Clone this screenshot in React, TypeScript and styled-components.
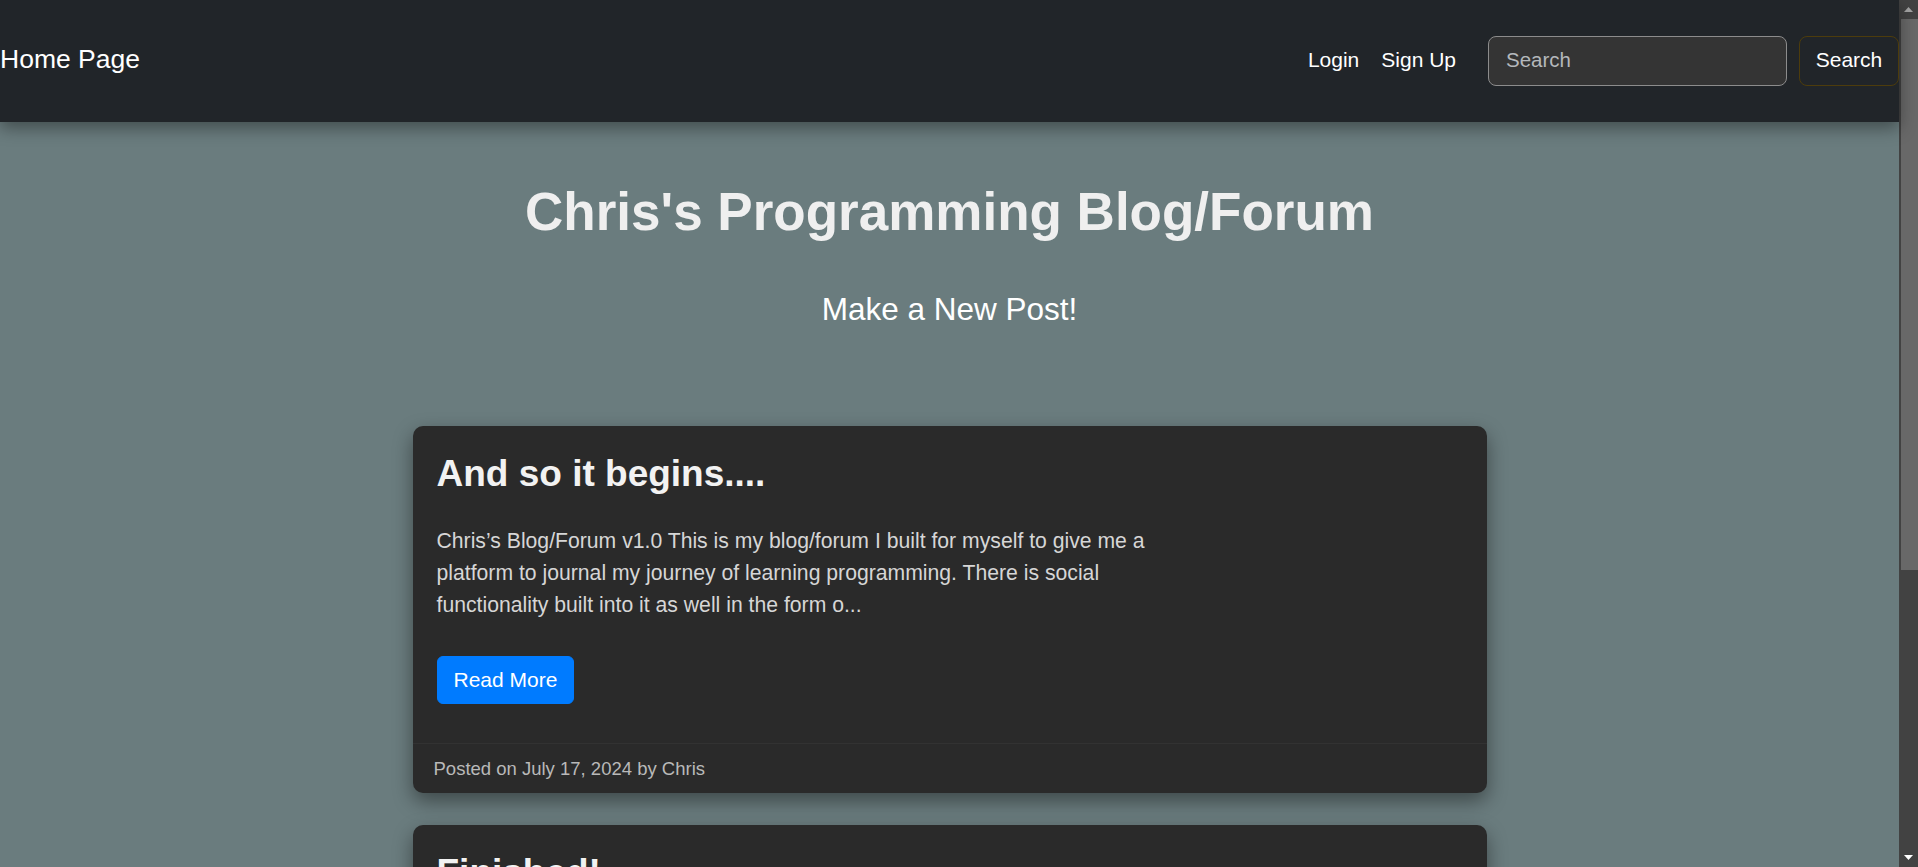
import React from "react";
import styled, { createGlobalStyle } from "styled-components";

const GlobalStyle = createGlobalStyle`
  html, body {
    background: #6a7c7e;
  }
  body {
    margin: 0;
    font-family: "Liberation Sans", Arial, sans-serif;
    color: #f0f0f0;
  }
  * {
    box-sizing: border-box;
  }
`;

const Shell = styled.div`
  display: flex;
  align-items: flex-start;
`;

const Page = styled.div`
  flex: 1;
  min-width: 0;
`;

/* window scrollbar (drawn, since the capture hides native scrollbars) */
const ScrollRail = styled.div`
  position: sticky;
  top: 0;
  flex: 0 0 19px;
  width: 19px;
  height: 100vh;
  background: #424242;
  display: flex;
  flex-direction: column;
`;

const ScrollButton = styled.div`
  flex: 0 0 19px;
  display: flex;
  align-items: center;
  justify-content: center;
`;

const ScrollTrack = styled.div`
  flex: 1;
  display: flex;
  flex-direction: column;
  padding-left: 2px;
`;

const ScrollThumb = styled.div`
  height: 551px;
  background: #686868;
`;

const NavBar = styled.nav`
  position: relative;
  z-index: 2;
  height: 122px;
  background: #212529;
  display: flex;
  align-items: center;
  justify-content: space-between;
  padding: 0;
  box-shadow: 0 6px 16px rgba(0, 0, 0, 0.38);
`;

const Brand = styled.a`
  font-size: 26.5px;
  line-height: 1.2;
  color: #ffffff;
  text-decoration: none;
  padding-bottom: 3px;
`;

const NavRight = styled.div`
  display: flex;
  align-items: center;
`;

const NavLinks = styled.ul`
  display: flex;
  list-style: none;
  margin: 0;
  padding: 0 0 2px;
`;

const NavLink = styled.a`
  display: block;
  padding: 0 11px;
  font-size: 21px;
  line-height: 1.5;
  color: #ffffff;
  text-decoration: none;
`;

const SearchForm = styled.form`
  display: flex;
  align-items: center;
  gap: 12px;
  margin: 0 0 0 21px;
`;

const SearchInput = styled.input`
  width: 299px;
  height: 50px;
  padding: 0 17px 2px;
  font-family: "Liberation Sans", Arial, sans-serif;
  font-size: 20.5px;
  color: #e6e6e6;
  background: #343434;
  border: 1px solid #8c8c8c;
  border-radius: 8px;
  outline: none;
  &::placeholder {
    color: #b4b8bc;
  }
`;

const SearchButton = styled.button`
  width: 100px;
  height: 50px;
  padding: 0 0 2px;
  font-family: "Liberation Sans", Arial, sans-serif;
  font-size: 21px;
  color: #ffffff;
  background: transparent;
  border: 1px solid #4d3c0c;
  border-radius: 8px;
  cursor: pointer;
`;

const Hero = styled.header`
  padding-top: 58px;
  text-align: center;
`;

const PageTitle = styled.h1`
  margin: 0 0 47px;
  font-size: 53px;
  line-height: 1.2;
  font-weight: 700;
  color: #efefef;
`;

const NewPostLink = styled.a`
  display: block;
  margin: 0;
  font-size: 31.5px;
  line-height: 1.2;
  font-weight: 400;
  color: #ffffff;
  text-decoration: none;
`;

const PostList = styled.main`
  display: flex;
  flex-direction: column;
  align-items: center;
  gap: 32px;
  padding: 98px 0 114px;
`;

const Card = styled.article`
  width: 1074px;
  background: #2a2a2a;
  border-radius: 10px;
  box-shadow: 0 8px 20px rgba(0, 0, 0, 0.42);
  overflow: hidden;
`;

const CardBody = styled.div`
  padding: 26px 24px 39px;
`;

const CardTitle = styled.h2`
  margin: 0;
  font-size: 37px;
  line-height: 1.2;
  font-weight: 700;
  color: #f2f2f2;
`;

const Excerpt = styled.p`
  margin: 28px 0 35px;
  max-width: 750px;
  font-size: 21.2px;
  line-height: 32px;
  color: #d6d6d6;
`;

const ReadMore = styled.a`
  display: inline-block;
  padding: 7.5px 16px;
  font-size: 21px;
  line-height: 31.5px;
  color: #ffffff;
  background: #007bff;
  border: 1px solid #007bff;
  border-radius: 6px;
  text-decoration: none;
`;

const CardFooter = styled.footer`
  padding: 11px 21px 10px;
  border-top: 1px solid #323232;
  font-size: 18.5px;
  line-height: 27.75px;
  color: #b9b9b9;
`;

type Post = {
  title: string;
  excerpt: string;
  date: string;
  author: string;
};

const posts: Post[] = [
  {
    title: "And so it begins....",
    excerpt:
      "Chris’s Blog/Forum v1.0 This is my blog/forum I built for myself to give me a platform to journal my journey of learning programming. There is social functionality built into it as well in the form o...",
    date: "July 17, 2024",
    author: "Chris",
  },
  {
    title: "Finished!",
    excerpt:
      "The first version of the blog/forum is finished! Users can sign up, log in, write posts and comment on each other's posts. Next up is adding search and a few more feat...",
    date: "July 17, 2024",
    author: "Chris",
  },
];

const Arrow = ({ down, color }: { down?: boolean; color: string }) => (
  <svg width="9" height="5" viewBox="0 0 9 5" aria-hidden="true">
    <polygon points={down ? "0,0 9,0 4.5,5" : "0,5 9,5 4.5,0"} fill={color} />
  </svg>
);

export default function App() {
  return (
    <>
      <GlobalStyle />
      <Shell>
        <Page>
          <NavBar>
            <Brand href="#">Home Page</Brand>
            <NavRight>
              <NavLinks>
                <li>
                  <NavLink href="#">Login</NavLink>
                </li>
                <li>
                  <NavLink href="#">Sign Up</NavLink>
                </li>
              </NavLinks>
              <SearchForm onSubmit={(e) => e.preventDefault()}>
                <SearchInput type="search" placeholder="Search" aria-label="Search" />
                <SearchButton type="submit">Search</SearchButton>
              </SearchForm>
            </NavRight>
          </NavBar>
          <Hero>
            <PageTitle>Chris's Programming Blog/Forum</PageTitle>
            <NewPostLink href="#">Make a New Post!</NewPostLink>
          </Hero>
          <PostList>
            {posts.map((p) => (
              <Card key={p.title}>
                <CardBody>
                  <CardTitle>{p.title}</CardTitle>
                  <Excerpt>{p.excerpt}</Excerpt>
                  <ReadMore href="#">Read More</ReadMore>
                </CardBody>
                <CardFooter>
                  Posted on {p.date} by {p.author}
                </CardFooter>
              </Card>
            ))}
          </PostList>
        </Page>
        <ScrollRail aria-hidden="true">
          <ScrollButton>
            <Arrow color="#a3a3a3" />
          </ScrollButton>
          <ScrollTrack>
            <ScrollThumb />
          </ScrollTrack>
          <ScrollButton>
            <Arrow down color="#ffffff" />
          </ScrollButton>
        </ScrollRail>
      </Shell>
    </>
  );
}
